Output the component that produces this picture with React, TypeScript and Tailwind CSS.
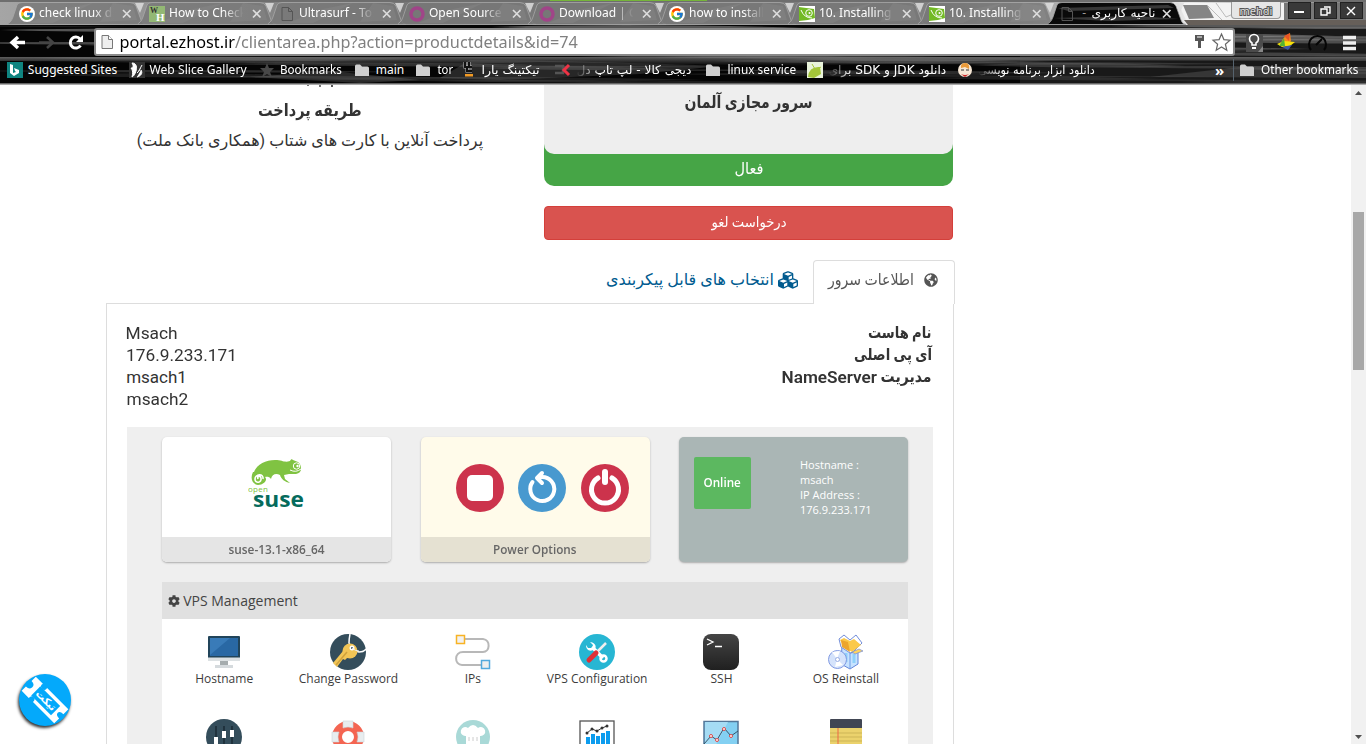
import { useLayoutEffect, useRef, useState, type ReactNode } from "react";
import { FaCog, FaCubes, FaGlobeAmericas } from "react-icons/fa";
import { FcGoogle } from "react-icons/fc";

/* Scales one line of text horizontally so that it fills a known width. */
function Fit({ w, children, className = "" }: { w: number; children: ReactNode; className?: string }) {
  const ref = useRef<HTMLSpanElement>(null);
  const [s, setS] = useState(1);
  useLayoutEffect(() => {
    if (ref.current) setS(w / ref.current.offsetWidth);
  }, [w]);
  return (
    <span className={`inline-flex shrink-0 justify-center whitespace-nowrap ${className}`} style={{ width: w }}>
      <span ref={ref} dir="auto" className="inline-block shrink-0" style={{ transform: `scaleX(${s})` }}>
        {children}
      </span>
    </span>
  );
}

/* ---------- Browser theme ---------- */
const streaks = Array.from({ length: 60 }, (_, i) => {
  const x = (i * 397) % 1366;
  const y = 26 + ((i * 23) % 58);
  const len = 130 + ((i * 71) % 260);
  const h = 1.5 + ((i * 7) % 4);
  return { d: `M${x - 60} ${y} Q${x + len / 3} ${y - h} ${x + len} ${y + 1} Q${x + len / 3} ${y + h} ${x - 60} ${y}Z`, o: 0.16 + ((i * 13) % 5) * 0.09 };
});

function ThemeArt() {
  return (
    <svg className="absolute inset-0" width="1366" height="85" viewBox="0 0 1366 85">
      <defs>
        <linearGradient id="frame" x1="0" x2="1" y1="0" y2="0">
          <stop offset="0" stopColor="#a5a5a5" />
          <stop offset=".3" stopColor="#777" />
          <stop offset=".7" stopColor="#808080" />
          <stop offset=".87" stopColor="#e8e8e8" />
          <stop offset="1" stopColor="#777" />
        </linearGradient>
        <linearGradient id="band" x1="0" x2="0" y1="0" y2="1">
          <stop offset="0" stopColor="#777" stopOpacity=".8" />
          <stop offset="1" stopColor="#555" stopOpacity="0" />
        </linearGradient>
      </defs>
      <rect width="1366" height="85" fill="#050505" />
      <rect width="1366" height="25" fill="url(#frame)" />
      {streaks.map((s, i) => (
        <path key={i} d={s.d} fill="#a0a0a0" opacity={s.o} />
      ))}
      <path d="M0 57 H1366 V61 L1010 60 L800 66 L540 62 L400 66 L240 62 L0 61Z" fill="url(#band)" />
      <path d="M470 60 Q560 60 720 66 L640 74 L500 80 L440 78Z" fill="#777" opacity=".3" />
      <path d="M250 77 L330 71 L420 80 L360 83Z M1150 77 L1250 66 L1366 69 V78Z" fill="#888" opacity=".28" />
      <path d="M1020 25 H1366 V84 H1020Z" fill="#666" opacity=".22" />
      <path d="M0 0 H1366 V2 H0Z" fill="#6e6e6e" />
      <path d="M550 0 H707 V1 H550Z" fill="#76b53a" />
      <path d="M1178 3 H1366 V20 H1186Z" fill="#f3f3f3" />
      <path d="M1183 5 L1207 5 L1214 18 L1189 19Z" fill="#858585" />
      <path d="M1207 5 L1222 20 M1216 3 L1226 17 L1238 12" stroke="#bbb" fill="none" />
      <path d="M1184 20 H1366 V25 H1188Z" fill="#665f59" />
      <path d="M1284 3 H1366 V20 H1284Z" fill="#777" />
      <path d="M0 83.5 H1366" stroke="#666" />
      <path d="M0 84.5 H1366" stroke="#aaa" />
    </svg>
  );
}

const PageIcon = ({ dark }: { dark?: boolean }) => (
  <svg width="16" height="16" viewBox="0 0 16 16">
    <path d="M3 1.5h6.5l4 4v9H3z" fill={dark ? "none" : "#eee"} stroke={dark ? "#555" : "#777"} />
    <path d="M9.5 1.5v4h4" fill={dark ? "none" : "#fff"} stroke={dark ? "#555" : "#777"} />
  </svg>
);
const WikiHow = () => (
  <svg width="16" height="16" viewBox="0 0 16 16">
    <rect width="16" height="16" fill="#93b874" />
    <text x="1" y="7" fontFamily="Liberation Serif" fontWeight="bold" fontSize="8" fill="#333">W</text>
    <text x="7" y="15" fontFamily="Liberation Serif" fontWeight="bold" fontSize="11" fill="#fff">H</text>
  </svg>
);
const Ring = () => (
  <svg width="16" height="16" viewBox="0 0 16 16">
    <circle cx="8" cy="8" r="6" fill="none" stroke="#a04488" strokeWidth="3.4" />
  </svg>
);
const Suse = () => (
  <svg width="16" height="16" viewBox="0 0 16 16">
    <rect width="16" height="16" fill="#fff" />
    <path d="M0 1 Q7 2 15 3 L16 12 Q8 15 0 15Z" fill="#73ba25" />
    <path d="M2 4 Q5 12 13 12" stroke="#fff" fill="none" />
    <circle cx="10" cy="7" r="3.3" fill="none" stroke="#fff" />
    <circle cx="10.5" cy="7" r="1" fill="#fff" />
  </svg>
);

function TabItem({ icon, children, active }: { icon: ReactNode; children: ReactNode; active?: boolean }) {
  return (
    <div className="relative flex h-[25px] w-[130px] shrink-0 items-center pl-[11px] pt-[2px]">
      <svg className="absolute left-0 top-0" width="138" height="25" viewBox="0 0 138 25">
        <path d="M-2 24.5 Q3 23 5 17 L9 5 Q10 2.5 14 2.5 H122 Q126 2.5 128 6 L133 20 Q134 24 138 24.5Z" fill={active ? "#0a0a0a" : "#777"} fillOpacity={active ? 1 : 0.8} stroke="#aaa" strokeOpacity=".75" />
        {active ? (
          <path d="M10 8 L120 5 L126 8 L20 11Z M5 18 L90 16 L131 19 L60 21Z" fill="#666" opacity=".5" />
        ) : (
          <path d="M20 23 L55 9 L85 3 L45 23Z M92 22 L105 3 L125 6 L129 20Z" fill="#aaa" opacity=".14" />
        )}
        <path d="M127 3 H136 L132 13Z" fill="#ddd" opacity=".85" />
      </svg>
      <span className="relative flex h-4 w-4 shrink-0">{icon}</span>
      <span className={`relative ml-1 h-[18px] w-[76px] overflow-hidden whitespace-nowrap text-[12px] leading-[16px] text-white ${active ? "text-right" : "[mask-image:linear-gradient(90deg,#000_72%,transparent_98%)]"}`}>
        {children}
      </span>
      <svg className="relative ml-[7px] mt-px shrink-0" width="10" height="10" viewBox="0 0 10 10">
        <path d="M1 1l7.500 7.500M8.500 1L1 8.500" stroke="#ddd" strokeWidth="1.7" />
      </svg>
    </div>
  );
}

const Folder = () => (
  <svg width="16" height="16" viewBox="0 0 16 16">
    <path d="M0 4 Q0 2.5 1.5 2.5 H5 L7 4.500 H12.500 Q14 4.500 14 6 V14 H0Z" fill="#cfcfcf" />
  </svg>
);

function Bookmark({ icon, className, children }: { icon: ReactNode; className: string; children: ReactNode }) {
  return (
    <div className={`flex shrink-0 items-center ${className}`}>
      <span className="flex h-4 w-4 shrink-0">{icon}</span>
      <span className="ml-[5px] whitespace-nowrap">{children}</span>
    </div>
  );
}

function Browser() {
  const fa = "font-['DejaVu_Sans',sans-serif] text-[12px]";
  return (
    <header className="relative h-[85px] shrink-0 overflow-hidden font-['Noto_Sans','DejaVu_Sans',sans-serif] text-[12px] text-white">
      <ThemeArt />
      <div className="relative flex h-[25px] pl-[8px]">
        <TabItem icon={<span className="rounded-full bg-white p-px"><FcGoogle size={14} /></span>}>check linux di</TabItem>
        <TabItem icon={<WikiHow />}>How to Check</TabItem>
        <TabItem icon={<PageIcon dark />}>Ultrasurf - To</TabItem>
        <TabItem icon={<Ring />}>Open Source</TabItem>
        <TabItem icon={<Ring />}>Download | C</TabItem>
        <TabItem icon={<span className="rounded-full bg-white p-px"><FcGoogle size={14} /></span>}>how to install</TabItem>
        <TabItem icon={<Suse />}>10. Installing</TabItem>
        <TabItem icon={<Suse />}>10. Installing</TabItem>
        <TabItem active icon={<PageIcon dark />}>
          <span className="pr-[5px] text-[#999]">-</span><Fit w={64} className={fa}>ناحیه کاربری</Fit>
        </TabItem>
        <div className="ml-[53px] mt-[2px] h-[17px] w-[50px] shrink-0 rounded-b border border-t-0 border-[#999] bg-[#e6e6e6] text-center text-[11px] leading-[17px] text-[#ddd] [-webkit-text-stroke:2px_#555] [paint-order:stroke_fill]">mehdi</div>
        <div className="ml-[7px] mt-[2px] flex gap-[3px]">
          {["M6 10h10", "M7 7h6v6H7z M10 5h6v6h-3", "M7 5l8 8M15 5l-8 8"].map((d) => (
            <svg key={d} width="23" height="18" viewBox="0 0 23 18">
              <rect x=".5" y=".5" width="22" height="16" fill="#393939" stroke="#222" />
              <path d={d} fill="none" stroke="#fff" strokeWidth={d === "M6 10h10" ? 2 : 1.4} />
            </svg>
          ))}
        </div>
      </div>

      <div className="relative flex h-[31px] items-center pl-[8px] pt-[3px]">
        <svg width="80" height="24" viewBox="0 0 80 24" fill="none" strokeWidth="3.4">
          <path d="M17 12.500H4M10 7l-6 5.500L10 18" stroke="#fff" />
          <path d="M31 12.500h13M39 7l6 5.500L39 18" stroke="#444" strokeWidth="2.600" />
          <path d="M72 9a5.500 5.500 0 1 0 .5 6.500" stroke="#fff" strokeWidth="3" />
          <path d="M75 5v7h-7z" fill="#fff" />
        </svg>
        <div className="ml-[6px] flex h-[28px] w-[1141px] shrink-0 items-center rounded-[3px] border-2 border-[#8a8a8a] bg-white pl-[3px] pr-0">
          <PageIcon />
          <div className="ml-[5px] text-[16px] leading-6 text-[#808080]"><Fit w={458}><span className="text-black">portal.ezhost.ir</span>/clientarea.php?action=productdetails&amp;id=74</Fit></div>
          <svg className="ml-auto" width="42" height="22" viewBox="0 0 42 22">
            <path d="M4 4h9v6H10v7H7v-7H4z" fill="#555" /><path d="M6 6h5" stroke="#fff" />
            <path d="M30.500 3l2.400 5.600 6.100.6-4.600 4 1.400 6-5.300-3.200-5.300 3.200 1.400-6-4.600-4 6.100-.6z" fill="#fff" stroke="#666" strokeWidth="1.2" />
          </svg>
        </div>
        <svg className="ml-[8px] shrink-0" width="122" height="24" viewBox="1243 30 122 24">
          <path d="M1246 34h17v13l-4 5h-13z" fill="#4b4b4b" /><path d="M1263 46v6h-5z" fill="#888" />
          <path d="M1252 45v-2q-2.5-1.5-2.5-4a4.5 4.5 0 0 1 9 0q0 2.500-2.500 4v2z" fill="none" stroke="#fff" strokeWidth="1.6" /><path d="M1252 48h4" stroke="#fff" strokeWidth="2" />
          <path d="M1281 43q2-6 9-10l1 8-5 5z" fill="#f68a1e" /><path d="M1284 36l6-3-1 8z" fill="#e75425" />
          <path d="M1277 44l7-3 11 1-5 4-8 1z" fill="#f6df0b" /><path d="M1279 46l5-8 1 8z" fill="#53b332" /><path d="M1282 47l10-2-4 5z" fill="#3d58a5" />
          <path d="M1311 50a8.500 8.500 0 1 1 13 0M1316 45l6-6" fill="none" stroke="#050505" strokeWidth="2" />
          <path d="M1343 37.500h13M1343 43h13M1343 48.500h13" stroke="#eee" strokeWidth="3.7" />
        </svg>
      </div>

      <div className="relative flex h-[28px] items-center pl-[7px]">
        <Bookmark className="w-[122px]" icon={<svg width="16" height="16"><rect width="16" height="16" fill="#0f8480" /><path d="M3 2v9l4 3 5-3V8L7 6l1 3 1 1-3 1V3z" fill="#fff" /></svg>}><Fit w={89}>Suggested Sites</Fit></Bookmark>
        <Bookmark className="w-[130px]" icon={<svg width="16" height="16"><rect width="16" height="16" fill="#333" /><path d="M3 1c5 0 5 5 4 8s-2 5-4 6c1-3 1-7-1-9 2 0 3-2 1-5M13 3c-2 3-2 6-5 8M12 8c2 3 0 6-4 7" fill="#fff" stroke="#fff" /></svg>}><Fit w={97}>Web Slice Gallery</Fit></Bookmark>
        <Bookmark className="w-[96px]" icon={<svg width="16" height="16"><path d="M8 1l2 5h5l-4 4 2 5-5-3-5 3 2-5-4-4h5z" fill="#484848" /></svg>}><Fit w={62}>Bookmarks</Fit></Bookmark>
        <Bookmark className="w-[61px]" icon={<Folder />}><Fit w={28}>main</Fit></Bookmark>
        <Bookmark className="w-[45px]" icon={<Folder />}><Fit w={16}>tor</Fit></Bookmark>
        <Bookmark className="w-[94px]" icon={<svg width="16" height="16"><path d="M4 0v5h2v4h5M8 0v5h3" fill="none" stroke="#bbb" strokeWidth="3" /><path d="M4 0v5h2v4h5M8 0v5h3" fill="none" stroke="#111" strokeWidth="2" /><rect x="4" y="12" width="8" height="2.500" fill="#f39b24" /></svg>}><Fit w={58} className={fa}>تیکتینگ یارا</Fit></Bookmark>
        <Bookmark className="w-[151px]" icon={<svg width="16" height="16"><path d="M0 4h8v7H0" fill="none" stroke="#555" strokeWidth="2.500" /><path d="M14 3L9 8l5 5" fill="none" stroke="#ed3345" strokeWidth="3" /></svg>}><Fit w={115} className={`${fa} [mask-image:linear-gradient(90deg,transparent,#000_20%)]`}>دیجی کالا - لپ تاپ دل</Fit></Bookmark>
        <Bookmark className="w-[101px]" icon={<Folder />}><Fit w={69}>linux service</Fit></Bookmark>
        <Bookmark className="w-[150px]" icon={<svg width="16" height="16"><rect width="16" height="16" fill="#e9f3db" /><path d="M1 15Q2 4 13 5l1 7L7 16z" fill="#a4c639" /><path d="M5 2l3 5M14 5L2 12" stroke="#a4c639" /></svg>}><Fit w={118} className={`${fa} [mask-image:linear-gradient(90deg,transparent,#000_20%)]`}>دانلود JDK و SDK برای</Fit></Bookmark>
        <Bookmark className="w-[250px]" icon={<svg width="16" height="16"><circle cx="8" cy="8" r="7" fill="#f6e7d5" /><path d="M4 6Q3 1 9 1q4 1 3 6L8 5z" fill="#e99a3a" /><path d="M4 8h3m2 0h3" stroke="#333" /><path d="M4 12q4 2 8 0l-4 3z" fill="#c22" /></svg>}><Fit w={117} className={`${fa} [mask-image:linear-gradient(90deg,transparent,#000_20%)]`}>دانلود ابزار برنامه نویسی</Fit></Bookmark>
        <span className="w-[26px] pl-[8px] text-[15px] font-bold leading-none">»</span>
        <span className="h-[22px] w-[7px] border-l border-[#56636e]" />
        <Bookmark className="" icon={<Folder />}><Fit w={97}>Other bookmarks</Fit></Bookmark>
      </div>
    </header>
  );
}

/* ---------- Drawings of the control panel ---------- */
const OpenSuse = () => (
  <svg width="56" height="52" viewBox="0 0 56 52">
    <path d="M6 14C9 6 18 2 27 2c8 0 9 3 15 1 1-2 2-2 3-1l5 2q3 2 3 7 0 4-5 5h-7l-5 1 1 4 5 4c-5-1-9-4-10-8-4-2-8-1-9 4-2-3-5-2-6-2 3 3-1 8-7 8-6-1-8-7-5-13z" fill="#80c342" />
    <path d="M15 21c1-6-8-5-8 0s7 4 6-1c-1-3-4-2-3 1" fill="none" stroke="#fff" strokeWidth="1.6" />
    <circle cx="48.500" cy="8" r="3.200" fill="none" stroke="#fff" /><circle cx="49.500" cy="8" r="1.200" fill="#fff" />
    <path d="M42 12q6 3 11-1" fill="none" stroke="#fff" />
    <text x="0" y="34" fontFamily="Open Sans, sans-serif" fontSize="8" fill="#80c342" textLength="20">open</text>
    <text x="5" y="49" fontFamily="Open Sans, sans-serif" fontWeight="bold" fontSize="21" fill="#056b5c" textLength="51" lengthAdjust="spacingAndGlyphs">suse</text>
  </svg>
);

function PowerIcons() {
  return (
    <>
      <svg width="48" height="48" viewBox="0 0 48 48"><circle cx="24" cy="24" r="24" fill="#cc334c" /><rect x="11" y="11" width="26" height="26" rx="5" fill="#fff" /></svg>
      <svg width="48" height="48" viewBox="0 0 48 48"><circle cx="24" cy="24" r="24" fill="#4899cf" /><path d="M14.500 18A12 12 0 1 0 24 13h-3" fill="none" stroke="#fff" strokeWidth="4" strokeLinecap="round" /><path d="M24 9l-5 5 5 5" fill="none" stroke="#fff" strokeWidth="4" strokeLinecap="round" strokeLinejoin="round" /></svg>
      <svg width="48" height="48" viewBox="0 0 48 48"><circle cx="24" cy="24" r="24" fill="#cc334c" /><path d="M17 14A13.500 13.500 0 1 0 31 14" fill="none" stroke="#fff" strokeWidth="5" strokeLinecap="round" /><path d="M24 8v10" stroke="#fff" strokeWidth="6" strokeLinecap="round" /></svg>
    </>
  );
}

const icons: { label: string; art: ReactNode }[] = [
  { label: "Hostname", art: <><rect x="2" y="2" width="32" height="24" rx="1" fill="#21445a" /><rect x="4" y="4" width="28" height="18" fill="#2968a4" /><path d="M4 4h20L4 21z" fill="#397bb8" /><path d="M2 23.500h32v3.500H2z" fill="#dce1e3" /><path d="M14 27h8v5h-8z" fill="#a5acae" /><path d="M9 31h18v3H9z" fill="#d5dadd" /></> },
  { label: "Change Password", art: <><circle cx="18" cy="18" r="18" fill="#344d5b" /><path d="M20 0q-1 5-1 9 3 8 10 9 5 0 7-3" fill="none" stroke="#fff" strokeWidth="1.5" /><path d="M13 17L3 29l4 4 6-8 2 1 5-5z" fill="#f2c556" /><circle cx="20" cy="17" r="7.500" fill="#f2c556" /><path d="M6 31l11-13" stroke="#cfa13b" strokeWidth="1.5" /><circle cx="22" cy="14" r="2.500" fill="#fff" /><circle cx="22" cy="14" r="1" fill="#344d5b" /><path d="M22 14q3 3 7 3" fill="none" stroke="#eee" /></> },
  { label: "IPs", art: <><path d="M9 5h19c8 1 7 13 0 13H8C-1 18-1 31 7 31h20" fill="none" stroke="#b8b8b8" strokeWidth="2" /><rect x="1.500" y="1.500" width="8" height="8" fill="#f1f1f1" stroke="#f8b324" strokeWidth="1.500" /><rect x="26.500" y="26.500" width="8" height="8" fill="#eee" stroke="#52a9dd" strokeWidth="1.500" /></> },
  { label: "VPS Configuration", art: <><circle cx="18" cy="18" r="18" fill="#27b6d3" /><path d="M13 13l11 11" stroke="#fff" strokeWidth="3.500" /><path d="M11 8l3 3-1 3-4 0-2-3c0 4 3 7 7 5 4-1 4-7-3-8z" fill="#fff" /><circle cx="24.500" cy="24.500" r="3" fill="none" stroke="#fff" strokeWidth="2.500" /><path d="M17 19L27 9" stroke="#eee" strokeWidth="2.500" /><path d="M10 26l7-7" stroke="#df3137" strokeWidth="5" strokeLinecap="round" /></> },
  { label: "SSH", art: <><defs><linearGradient id="ssh" x2="0" y2="1"><stop stopColor="#454545" /><stop offset="1" stopColor="#202020" /></linearGradient></defs><rect width="36" height="36" rx="8" fill="url(#ssh)" /><path d="M4 5l6 3-6 3M12 12.500h7" fill="none" stroke="#fff" strokeWidth="1.300" /></> },
  { label: "OS Reinstall", art: <><path d="M14 11l8 8 8-1v12l-8 5-9-5z" fill="#c7e3ff" stroke="#6386da" /><path d="M22 18v16" stroke="#6d9be8" /><path d="M18 19v9M26 20v9" stroke="#8fd1fa" strokeWidth="3" /><path d="M11 5l5-4 6 5 6-5 6 8-9 9-3 1-9-6z" fill="#fff" stroke="#728dd9" /><path d="M12 6l4-2 6 3 4-2 7 6-9 7-8-5z" fill="#fbc949" /><path d="M13 6l7 2 2 10-8-5z" fill="#eca52d" /><path d="M24 18l7-3 4 2-8 3z" fill="#ffd45f" stroke="#728dd9" strokeWidth=".7" /><circle cx="9.500" cy="25.500" r="9" fill="#d5e3fb" stroke="#819ae2" /><path d="M9 25L4 18l8-1zM9 25l6 6-8 2z" fill="#fff" /><circle cx="9.500" cy="25.500" r="2" fill="#fff" stroke="#9aaee3" /></> },
  { label: "", art: <><circle cx="18" cy="18" r="18" fill="#344d5b" /><path d="M10 7v25M18 7v25M26 7v25" stroke="#1e303b" strokeWidth="1.800" /><path d="M8 18h4v7H8zM16 12h4v7h-4zM24 11h4v7h-4z" fill="#fff" /></> },
  { label: "", art: <><circle cx="18" cy="18" r="11" fill="none" stroke="#f46552" strokeWidth="10" /><path d="M13 2h10v7q-5-2-10 0zM13 27q5 2 10 0v7H13zM2 13h7q-2 5 0 10H2zM27 13h7v10h-7q2-5 0-10z" fill="#e8edef" stroke="#ccd3d7" strokeWidth=".6" /></> },
  { label: "", art: <><circle cx="18" cy="18" r="17" fill="#a9d9d7" /><path d="M11 25v-8a4.500 4.500 0 1 1 2-8q5-6 10 0a4.500 4.500 0 1 1 2 8v8z" fill="#fff" /><path d="M14 22v-4m4 4v-4m4 4v-4" stroke="#ccc" /></> },
  { label: "", art: <><rect x="1" y="2" width="34" height="33" fill="#fff" stroke="#555" strokeWidth="1.300" /><path d="M9 35V18M14 35V15M19 35V17M24 35V14M29 35V12" stroke="#0c9cee" strokeWidth="4" /><path d="M8 14l5-4 5 2 5-3 5-2" fill="none" stroke="#333" /><g fill="#333"><circle cx="8" cy="14" r="1.500" /><circle cx="13" cy="10" r="1.500" /><circle cx="18" cy="12" r="1.500" /><circle cx="23" cy="9" r="1.500" /><circle cx="28" cy="7" r="1.500" /></g></> },
  { label: "", art: <><rect x="1" y="2.500" width="34" height="32" fill="#83d0f2" stroke="#537799" strokeWidth="1.500" /><path d="M2 3h23L8 35H2z" fill="#a5dcf4" /><path d="M1 25l7-8 6 4 7-12 7 8 7-5" fill="none" stroke="#35566d" /><g fill="#fff" stroke="#da4848"><circle cx="8" cy="17" r="1.500" /><circle cx="14" cy="21" r="1.500" /><circle cx="21" cy="10" r="1.500" /><circle cx="28" cy="17" r="1.500" /></g></> },
  { label: "", art: <><path d="M2 8h32v28H2z" fill="#ebd26c" /><path d="M2 1q0-1 1-1h30q1 0 1 1v8H2z" fill="#414653" /><path d="M2 14h32M2 18h32M2 22h32" stroke="#cdb557" /><path d="M10 9v27" stroke="#ee6944" /></> },
];

function ServerPanel() {
  return (
    <div className="h-[318px] overflow-hidden bg-[#efefef] pl-[35px] pr-[25px] pt-[10px] font-['Open_Sans',sans-serif] text-[#3c3c3c]" dir="ltr">
      <div className="flex gap-[29.5px]">
        <div className="flex h-[125px] w-[229px] flex-col overflow-hidden rounded-[5px] bg-white shadow-[0_1px_2px_#aaa]">
          <div className="flex h-[100px] items-start justify-center pr-[2px] pt-[21px]"><OpenSuse /></div>
          <div className="h-[25px] bg-[#e5e5e5] text-center text-[12px] font-semibold leading-[25px] text-[#666]"><Fit w={96}>suse-13.1-x86_64</Fit></div>
        </div>
        <div className="flex h-[125px] w-[229px] flex-col overflow-hidden rounded-[5px] bg-[#fffbea] shadow-[0_1px_2px_#aaa]">
          <div className="flex h-[100px] items-center justify-center gap-[14.5px] pl-[14px] pt-[2px]"><PowerIcons /></div>
          <div className="h-[25px] bg-[#e5e1d2] text-center text-[12px] font-semibold leading-[25px] text-[#666]"><Fit w={84}>Power Options</Fit></div>
        </div>
        <div className="flex h-[125px] w-[229px] rounded-[5px] bg-[#aab6b5] pl-[15px] pt-5 shadow-[0_1px_2px_#aaa]">
          <div className="h-[52px] w-[57px] rounded-[2px] bg-[#5cb860] text-center text-[12px] font-semibold leading-[51px] text-white"><Fit w={37}>Online</Fit></div>
          <div className="ml-[49px] text-[11px] leading-[15px] text-white">Hostname :<br />msach<br />IP Address :<br />176.9.233.171</div>
        </div>
      </div>
      <div className="mt-5 flex h-[37px] items-center bg-[#e0e0e0] pl-[6px] text-[14px] text-[#444]">
        <FaCog size={12} /><Fit w={115} className="ml-[3px]">VPS Management</Fit>
      </div>
      <div className="grid h-[200px] grid-cols-6 content-start bg-white pt-[15px]">
        {icons.map((it, i) => (
          <div key={i} className="flex h-[85px] flex-col items-center text-[12px] leading-[17px]">
            <svg width="36" height="36" viewBox="0 0 36 36">{it.art}</svg>
            <span className="whitespace-nowrap">{it.label}</span>
          </div>
        ))}
      </div>
    </div>
  );
}

export default function App() {
  return (
    <div className="relative flex h-[744px] w-[1366px] flex-col overflow-hidden bg-white">
      <Browser />
      <div className="flex min-h-0 flex-1">
        <main className="w-[1351px] overflow-hidden pl-[106px] font-['Roboto','DejaVu_Sans',sans-serif] text-[#333]">
          <div className="flex h-[175px] gap-[29px]">
            <div className="flex w-[408px] shrink-0 flex-col items-center text-[16px]">
              <div className="flex h-[3px] gap-[10px] self-start pl-[201px]"><span className="h-px w-[2px] bg-[#777]" /><span className="h-[2px] w-[2px] bg-[#777]" /><span className="h-[2px] w-[2px] bg-[#555]" /></div>
              <Fit w={104} className="mt-[8px] h-[27px] text-[17px] font-bold leading-[28px]">طریقه پرداخت</Fit>
              <Fit w={346} className="mt-[4px] h-[27px] text-[16px] leading-[28px]">پرداخت آنلاین با کارت های شتاب (همکاری بانک ملت)</Fit>
            </div>
            <div className="ml-px w-[409px]">
              <div className="h-[101px] rounded-b-[10px] bg-[#46a546] text-center text-white">
                <div className="h-[69px] rounded-b-[10px] bg-[#eee] pt-[4px] text-[17px] font-bold leading-[27px] text-[#333]"><Fit w={128}>سرور مجازی آلمان</Fit></div>
                <div className="text-[16px] leading-[29px]"><Fit w={29}>فعال</Fit></div>
              </div>
              <div className="mt-5 h-[34px] rounded-[4px] border border-[#d43f3a] bg-[#d9534f] text-center text-[14px] leading-[30px] text-white"><Fit w={75}>درخواست لغو</Fit></div>
            </div>
          </div>
          <div className="flex h-[43px] w-[849px] text-[16px]" dir="rtl">
            <div className="z-10 flex h-[44px] w-[142px] items-center rounded-t-[4px] border border-b-0 border-[#ddd] bg-white pr-[16px] pb-[5px] text-[#555]">
              <FaGlobeAmericas size={14} /><Fit w={86} className="mr-[10px]">اطلاعات سرور</Fit>
            </div>
            <div className="flex items-center pr-[15px] pb-[4px] text-[#005b8f]"><FaCubes size={20} /><Fit w={168} className="mr-[4px]">انتخاب های قابل پیکربندی</Fit></div>
          </div>
          <section className="h-[442px] w-[848px] border border-[#ddd] px-5 pt-[17.5px]">
            <div className="flex h-[105.5px] justify-between text-[17px] leading-[22px]">
              <div className="-ml-px flex flex-col"><Fit w={52}>Msach</Fit><Fit w={111}>176.9.233.171</Fit><Fit w={61}>msach1</Fit><Fit w={62}>msach2</Fit></div>
              <div className="flex flex-col items-end pr-px text-[16px] font-bold" dir="ltr">
                <Fit w={64} className="h-[22px]">نام هاست</Fit>
                <Fit w={78} className="h-[22px]">آی پی اصلی</Fit>
                <div className="flex h-[22px] gap-[4px]"><span className="text-[17px] font-semibold"><Fit w={96}>NameServer</Fit></span><Fit w={51}>مدیریت</Fit></div>
              </div>
            </div>
            <ServerPanel />
          </section>
        </main>
        <aside className="flex w-[15px] shrink-0 flex-col items-center bg-[#f1f1f1]">
          <svg width="15" height="15" viewBox="0 0 15 15"><path d="M4 10h7L7.500 6z" fill="#505050" /></svg>
          <div className="mt-[112px] h-[158px] w-[11px] bg-[#a8a8a8]" />
          <svg className="mt-auto" width="15" height="15" viewBox="0 0 15 15"><path d="M4 6h7l-3.500 4z" fill="#505050" /></svg>
        </aside>
      </div>
      <div className="absolute left-[19px] top-[674px] flex h-[52px] w-[52px] items-center justify-center rounded-full bg-[#04a9fb] shadow-[-1px_2px_3px_#333]">
        <svg width="52" height="52" viewBox="0 0 52 52">
          <g transform="translate(26 26) rotate(45)">
            <path d="M-23-10H-13Q-14-6-10-6T-7-10H23V-3Q18-3 18 0T23 3V10H-7Q-7 6-10 6T-13 10H-23V4Q-18 4-18 0T-23-4Z" fill="#fff" />
            <rect x="-13" y="-6.500" width="28" height="13" fill="#04a9fb" />
            <text x="1" y="3" textAnchor="middle" fontFamily="DejaVu Sans, sans-serif" fontWeight="bold" fontSize="10" fill="#fff">تیکت</text>
          </g>
        </svg>
      </div>
    </div>
  );
}
